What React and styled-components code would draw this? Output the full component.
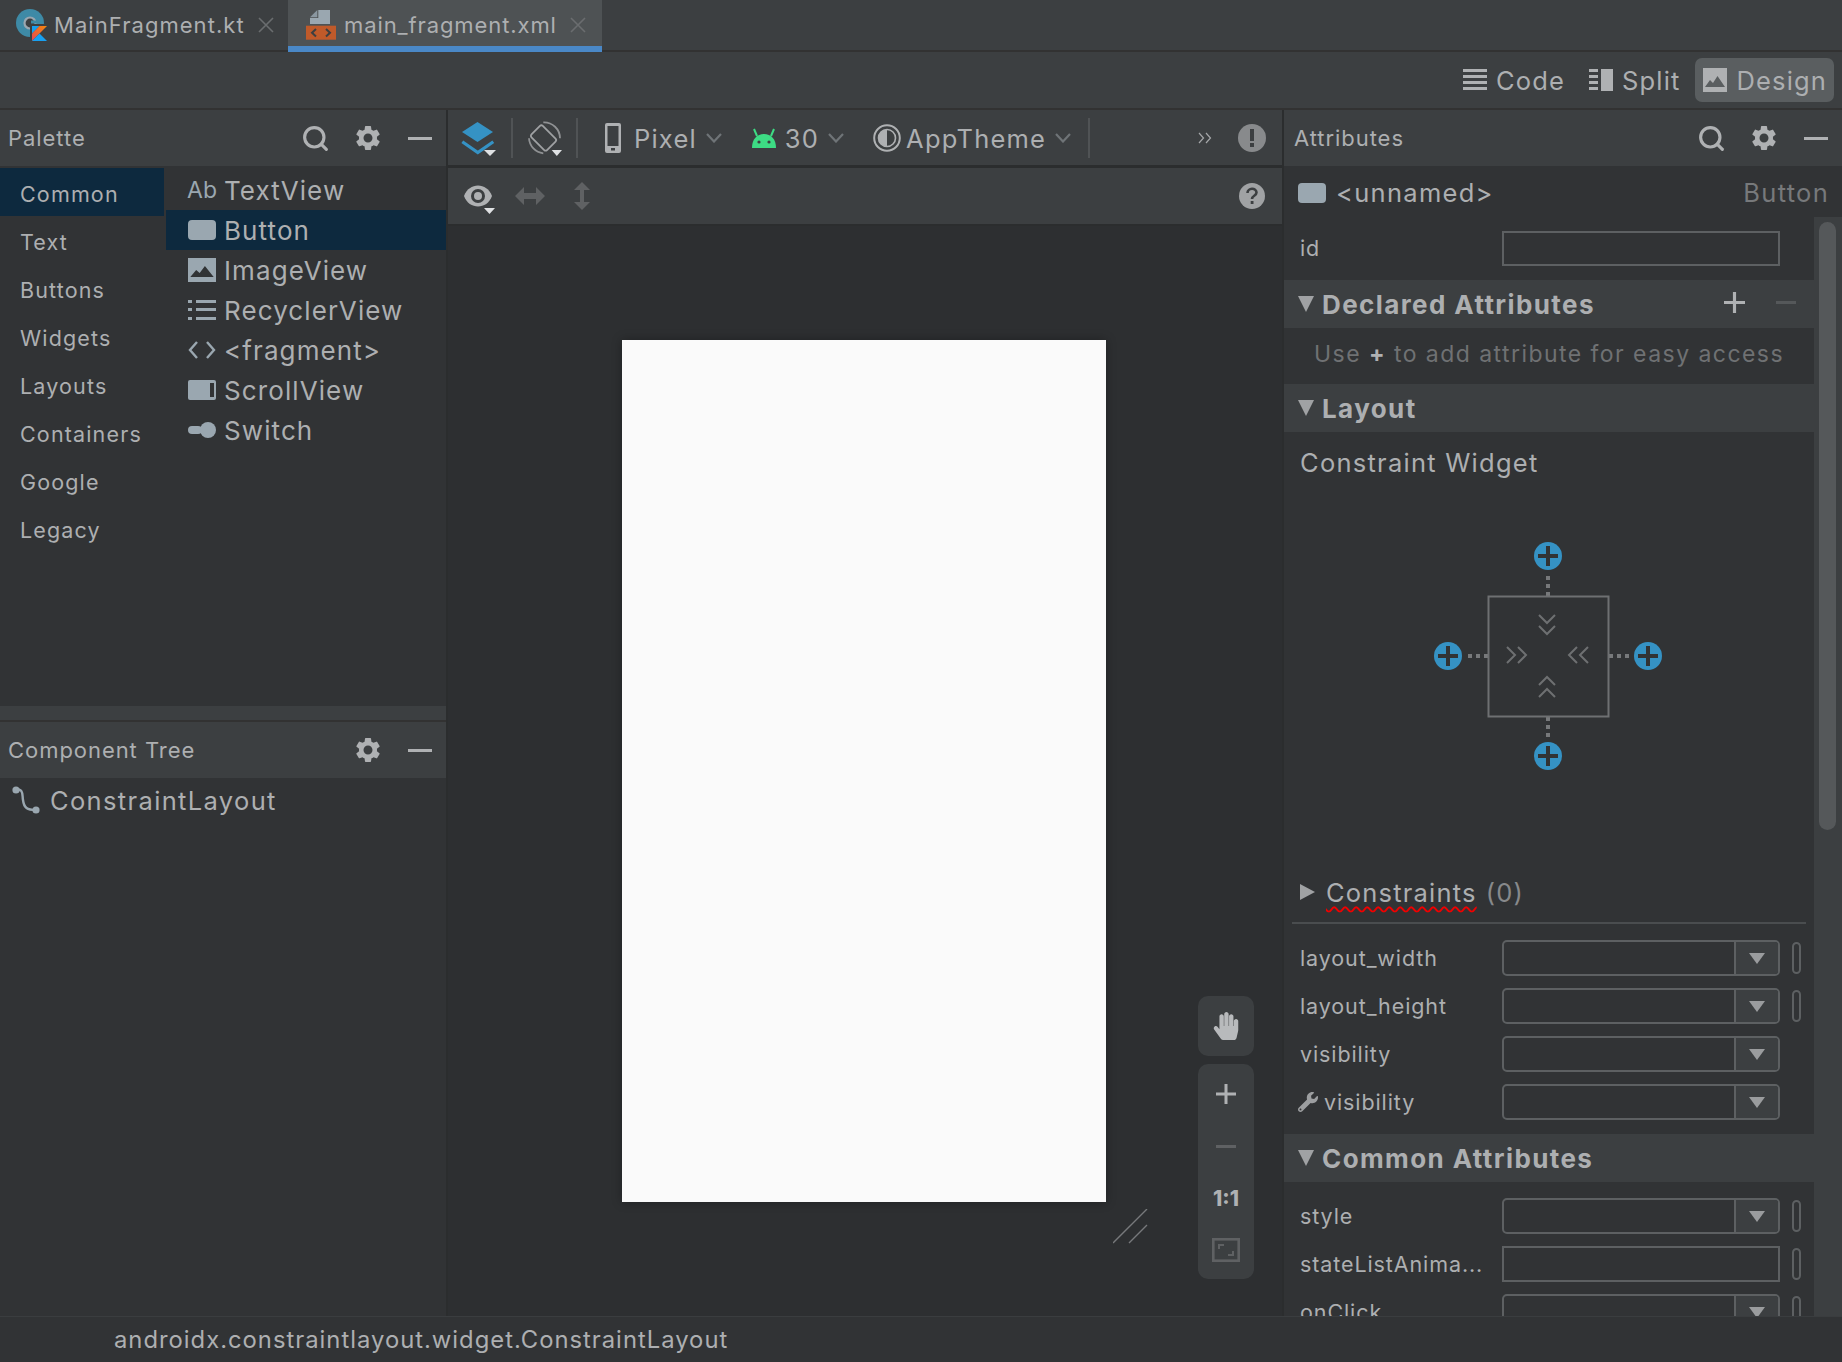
import styled, { createGlobalStyle } from 'styled-components';
import { MdSettings } from 'react-icons/md';
import { FaHandPaper, FaWrench } from 'react-icons/fa';
import { Search } from 'lucide-react';

const GlobalStyle = createGlobalStyle`
  html, body {
    margin: 0;
    padding: 0;
    background: #3c3f41;
  }
  * {
    box-sizing: border-box;
  }
`;

const Root = styled.div`
  width: 1842px;
  height: 1362px;
  overflow: hidden;
  display: flex;
  flex-direction: column;
  background: #3c3f41;
  color: #adafb1;
  font-family: Inter, "Liberation Sans", sans-serif;
  font-size: 21px;
  letter-spacing: 0.6px;
`;

const TabBar = styled.div`
  height: 52px;
  flex: none;
  display: flex;
  border-bottom: 2px solid #323232;
`;

const Tab = styled.div`
  height: ${p => (p.$active ? '52px' : '50px')};
  width: ${p => p.$width}px;
  display: flex;
  align-items: center;
  padding: ${p => (p.$active ? '4px' : '0')} 0 0 ${p => p.$pad}px;
  background: ${p => (p.$active ? '#4e5254' : 'transparent')};
  border-bottom: ${p => (p.$active ? '6px solid #4a88c7' : 'none')};
  font-size: 22px;
  letter-spacing: ${p => (p.$active ? '0.9px' : '1.05px')};
  svg { flex: none; }
`;

const TabName = styled.span`
  margin-left: ${p => p.$gap}px;
  width: ${p => p.$width}px;
  white-space: nowrap;
`;

const CloseIcon = styled.svg`
  width: 16px;
  height: 16px;
  stroke: #6a6d6f;
  stroke-width: 1.6;
  fill: none;
`;

const ModeBar = styled.div`
  height: 58px;
  flex: none;
  display: flex;
  justify-content: flex-end;
  align-items: center;
  padding-right: 8px;
  border-bottom: 2px solid #323232;
`;

const ModeButton = styled.div`
  height: 44px;
  display: flex;
  align-items: center;
  gap: 9px;
  padding: ${p => (p.$active ? '0 7px 0 8px' : '0 8px')};
  margin-right: ${p => p.$right || 0}px;
  margin-left: ${p => (p.$active ? '7px' : '0')};
  border-radius: 7px;
  background: ${p => (p.$active ? '#5a5e60' : 'transparent')};
  font-size: 25.5px;
  letter-spacing: 1.15px;
`;

const Main = styled.div`
  flex: 1;
  min-height: 0;
  display: flex;
`;

const LeftColumn = styled.div`
  width: 448px;
  flex: none;
  display: flex;
  flex-direction: column;
  background: #313335;
  border-right: 2px solid #2b2d2e;
`;

const PanelHeader = styled.div`
  height: ${p => p.$height || 56}px;
  flex: none;
  display: flex;
  align-items: center;
  padding: 0 14px 0 ${p => p.$pad || 8}px;
  background: #3c3f41;
  font-size: 22px;
  letter-spacing: 0.95px;
`;

const PanelTitle = styled.span`
  flex: 1;
`;

const HeaderIcons = styled.div`
  display: flex;
  align-items: center;
  gap: 24px;
  color: #afb1b3;
`;

const GearSlot = styled.span`
  display: block;
  margin: 0 1px 0 -1px;
`;

const MinusBar = styled.span`
  display: block;
  width: ${p => p.$width || 24}px;
  height: 3px;
  margin-top: ${p => p.$top || 0}px;
  background: ${p => p.$color || '#afb1b3'};
`;

const Palette = styled.div`
  height: 596px;
  flex: none;
  display: flex;
  flex-direction: column;
`;

const PaletteBody = styled.div`
  flex: 1;
  display: flex;
  padding-top: 2px;
`;

const CategoryList = styled.div`
  width: 164px;
  flex: none;
  margin-right: 2px;
`;

const Category = styled.div`
  height: 48px;
  display: flex;
  align-items: center;
  padding: 3px 0 0 20px;
  background: ${p => (p.$selected ? '#0d293e' : 'transparent')};
  font-size: 21.5px;
  letter-spacing: 1.15px;
`;

const ItemList = styled.div`
  flex: 1;
  padding-top: 2px;
`;

const Item = styled.div`
  height: 40px;
  display: flex;
  align-items: center;
  gap: 8px;
  padding-left: 22px;
  background: ${p => (p.$selected ? '#0d293e' : 'transparent')};
  font-size: 26px;
  letter-spacing: 1.1px;
`;

const ItemGlyph = styled.span`
  width: 28px;
  flex: none;
  display: flex;
  justify-content: center;
  color: #9aa7b0;
  font-size: 23px;
  letter-spacing: 0;
`;

const Band = styled.div`
  height: 16px;
  flex: none;
  background: #3c3f41;
  border-bottom: 2px solid #323232;
`;

const TreeRow = styled.div`
  height: 46px;
  display: flex;
  align-items: center;
  gap: 10px;
  padding: 0 0 2px 12px;
  font-size: 25.5px;
  letter-spacing: 1.35px;
`;

const Center = styled.div`
  flex: 1;
  min-width: 0;
  display: flex;
  flex-direction: column;
`;

const DesignToolbar = styled.div`
  height: ${p => p.$height}px;
  flex: none;
  display: flex;
  align-items: center;
  padding: ${p => p.$top || 0}px 16px 0 13px;
  background: #3c3f41;
  border-bottom: ${p => p.$border}px solid #2b2d2e;
`;

const ToolbarDivider = styled.span`
  width: 2px;
  height: 40px;
  flex: none;
  margin: 0 15px 0 ${p => p.$left || 14}px;
  background: #505355;
`;

const ToolGap = styled.span`
  width: ${p => p.$width}px;
  flex: none;
`;

const DropButton = styled.div`
  display: flex;
  align-items: center;
  margin-right: ${p => p.$right}px;
  font-size: 25.5px;
  letter-spacing: 1.2px;
`;

const DropLabel = styled.span`
  margin: 0 9px 0 ${p => p.$gap}px;
`;

const Spacer = styled.span`
  flex: 1;
`;

const EyeSlot = styled.span`
  display: flex;
  margin-top: 8px;
`;

const Canvas = styled.div`
  flex: 1;
  min-height: 0;
  position: relative;
  display: flex;
  justify-content: center;
  padding: 114px 2px 0 0;
  background: #2d2f31;
`;

const Page = styled.div`
  width: 484px;
  height: 862px;
  position: relative;
  background: #fafafa;
  box-shadow: 0 0 10px rgba(0, 0, 0, 0.3);
`;

const ResizeHandle = styled.svg`
  position: absolute;
  left: 491px;
  top: 869px;
  width: 36px;
  height: 36px;
  stroke: #77797b;
  stroke-width: 1.4;
  fill: none;
`;

const FloatingTools = styled.div`
  position: absolute;
  left: 750px;
  top: 770px;
  width: 56px;
  display: flex;
  flex-direction: column;
  gap: 8px;
`;

const HandTool = styled.div`
  height: 60px;
  display: flex;
  align-items: center;
  justify-content: center;
  background: #3c3f41;
  border-radius: 10px;
  color: #b8babc;
`;

const ZoomTools = styled.div`
  height: 215px;
  display: grid;
  grid-auto-rows: 52px;
  justify-items: center;
  align-items: center;
  padding-top: 4px;
  background: #3c3f41;
  border-radius: 10px;
  color: #afb1b3;
`;

const OneToOne = styled.span`
  font-size: 21px;
  font-weight: 800;
  letter-spacing: 0;
  line-height: 1;
`;

const RightPanel = styled.div`
  flex: none;
  width: 560px;
  display: flex;
  flex-direction: column;
  background: #313335;
  border-left: 2px solid #2b2d2e;
`;

const SelectionRow = styled.div`
  height: 51px;
  flex: none;
  display: flex;
  align-items: center;
  padding: 2px 13px 0 14px;
  font-size: 25.5px;
  letter-spacing: 1.3px;
`;

const SelectionName = styled.span`
  flex: 1;
  margin-left: 10px;
`;

const WidgetType = styled.span`
  color: #77797b;
`;

const AttributesBody = styled.div`
  flex: 1;
  min-height: 0;
  display: flex;
`;

const AttributesScroll = styled.div`
  flex: 1;
  min-width: 0;
  overflow: hidden;
`;

const ScrollTrack = styled.div`
  width: 28px;
  flex: none;
  padding: 5px 5px 0;
  background: #3c3f41;
`;

const ScrollThumb = styled.div`
  width: 17px;
  height: 608px;
  border-radius: 9px;
  background: #55585a;
`;

const SectionHeader = styled.div`
  height: 48px;
  display: flex;
  align-items: center;
  padding: 0 18px 0 14px;
  margin-top: ${p => p.$top || 0}px;
  background: #3c3f41;
  font-size: 26px;
  font-weight: 700;
  letter-spacing: 1.4px;
`;

const DownTriangle = styled.span`
  width: 0;
  height: 0;
  flex: none;
  margin-right: 8px;
  border-left: 8.5px solid transparent;
  border-right: 8.5px solid transparent;
  border-top: 16px solid #a0a2a4;
`;

const SectionTitle = styled.span`
  flex: 1;
  padding-top: 1px;
`;

const PlusIcon = styled.svg`
  width: 21px;
  height: 21px;
  margin-right: 31px;
  margin-top: -4px;
  fill: #afb1b3;
`;

const Hint = styled.div`
  height: 56px;
  display: flex;
  align-items: center;
  padding: 0 0 5px 30px;
  color: #6f7173;
  font-size: 23px;
  letter-spacing: 1.45px;
  white-space: pre;
`;

const HintPlus = styled.b`
  color: #afb1b3;
`;

const WidgetTitle = styled.div`
  height: 62px;
  display: flex;
  align-items: center;
  padding: 0 0 2px 16px;
  font-size: 25.5px;
  letter-spacing: 1.25px;
`;

const WidgetWrap = styled.div`
  display: flex;
  justify-content: center;
  padding: 46px 2px 0 0;
`;

const ConstraintsRow = styled.div`
  height: 54px;
  margin-top: 94px;
  display: flex;
  align-items: center;
  padding: 0 0 2px 16px;
  font-size: 25.5px;
  letter-spacing: 1.2px;
`;

const RightTriangle = styled.span`
  width: 0;
  height: 0;
  flex: none;
  margin-right: 11px;
  border-top: 8.5px solid transparent;
  border-bottom: 8.5px solid transparent;
  border-left: 15px solid #a0a2a4;
`;

const Squiggly = styled.span`
  text-decoration: underline wavy #f00000 2px;
  text-underline-offset: 4px;
`;

const Count = styled.span`
  margin-left: 9px;
  color: #87898b;
`;

const Divider = styled.div`
  height: 2px;
  margin: 2px 8px 10px;
  background: #4a4d4f;
`;

const PropRow = styled.div`
  height: ${p => p.$height || 48}px;
  margin-top: ${p => p.$top || 0}px;
  display: flex;
  align-items: center;
  padding: 0 0 ${p => (p.$height ? '1px' : '0')} 16px;
  font-size: 21.5px;
  letter-spacing: 0.9px;
`;

const PropLabel = styled.span`
  width: 202px;
  flex: none;
  display: flex;
  align-items: center;
  gap: 6px;
  white-space: nowrap;
`;

const WrenchWrap = styled.span`
  display: flex;
  margin-left: -2px;
  color: #9c9ea0;
`;

const Field = styled.div`
  width: 278px;
  height: ${p => (p.$short ? 35 : 36)}px;
  flex: none;
  display: flex;
  justify-content: flex-end;
  border: 2px solid #5d6062;
  border-radius: ${p => (p.$combo ? '5px' : '0')};
  overflow: hidden;
`;

const ComboArrow = styled.div`
  width: 44px;
  display: flex;
  align-items: center;
  justify-content: center;
  background: #3c3f41;
  border-left: 2px solid #5d6062;
`;

const ArrowGlyph = styled.span`
  width: 0;
  height: 0;
  border-left: 8.5px solid transparent;
  border-right: 8.5px solid transparent;
  border-top: 11px solid #9a9c9e;
`;

const BindPill = styled.span`
  width: 9px;
  height: 32px;
  flex: none;
  margin-left: 12px;
  border: 2px solid #5d6062;
  border-radius: 5px;
`;

const StatusBar = styled.div`
  height: 46px;
  flex: none;
  display: flex;
  align-items: center;
  padding-left: 114px;
  background: #313335;
  border-top: 1px solid #3a3d3f;
  font-size: 23.8px;
  letter-spacing: 1px;
`;

const Gear = ({ size = 30 }) => (
  <GearSlot>
    <MdSettings size={size} style={{ display: 'block' }} />
  </GearSlot>
);

const Find = () => <Search size={29} strokeWidth={2.6} style={{ display: 'block' }} />;

const Close = () => (
  <CloseIcon viewBox="0 0 16 16">
    <path d="M1 1 L15 15 M15 1 L1 15" />
  </CloseIcon>
);

const KotlinFileIcon = () => (
  <svg width="32" height="32" viewBox="0 0 32 32">
    <defs>
      <linearGradient id="kotlinBand" x1="1" y1="0" x2="0" y2="1">
        <stop offset="0" stopColor="#f88909" />
        <stop offset="1" stopColor="#e44857" />
      </linearGradient>
    </defs>
    <circle cx="14" cy="14" r="14" fill="#3e8aa6" />
    <circle cx="14" cy="14" r="5.5" fill="#3c3f41" stroke="#9aa7b0" strokeWidth="2.2" />
    <rect x="15" y="11.5" width="7" height="3" fill="#3e8aa6" />
    <rect x="14" y="15" width="18" height="17" fill="#3c3f41" />
    <path d="M16 17 H23.5 L16 24.5 Z" fill="#18a0f0" />
    <path d="M23.5 17 H31 L16 32 V24.5 Z" fill="url(#kotlinBand)" />
    <path d="M16 32 H31 L23.5 24.5 Z" fill="#18a0f0" />
  </svg>
);

const XmlFileIcon = () => (
  <svg width="30" height="30" viewBox="0 0 30 30">
    <path d="M12.3 0 H24 V14 H4 V8 H12.3 Z" fill="#9aa7b0" />
    <path d="M11.3 0 L4 7.3 H11.3 Z" fill="#8a97a0" />
    <rect x="0" y="15.7" width="30" height="14" fill="#c05a2a" />
    <path d="M10 19 L6 22.7 L10 26.5 M20 19 L24 22.7 L20 26.5" fill="none" stroke="#3c3f41" strokeWidth="2" />
  </svg>
);

const CodeIcon = () => (
  <svg width="24" height="22" viewBox="0 0 24 22" fill="#afb1b3">
    <rect y="0" width="24" height="3" />
    <rect y="6" width="24" height="3" />
    <rect y="12" width="24" height="3" />
    <rect y="18" width="24" height="3" />
  </svg>
);

const SplitIcon = () => (
  <svg width="24" height="22" viewBox="0 0 24 22" fill="#afb1b3">
    <rect x="12" y="0" width="12" height="22" />
    <rect y="0" width="9" height="3" />
    <rect y="6" width="9" height="3" />
    <rect y="12" width="9" height="3" />
    <rect y="18" width="9" height="3" />
  </svg>
);

const PictureIcon = ({ width = 24, height = 24, color = '#afb1b3', cut = '#5a5e60' }) => (
  <svg width={width} height={height} viewBox="0 0 24 24" preserveAspectRatio="none">
    <rect width="24" height="24" fill={color} />
    <path d="M2 19 L7 12 L10 15 L14.5 8 L22 19 Z" fill={cut} />
  </svg>
);

const LayersIcon = () => (
  <svg width="36" height="36" viewBox="0 0 36 36">
    <path d="M16.5 2 L32 12 L16.5 22 L1 12 Z" fill="#3592c4" />
    <path d="M1.3 21.7 L16.8 32.5 L32.3 21.7" fill="none" stroke="#3592c4" strokeWidth="3.2" />
    <path d="M23 30 H35 L29 36 Z" fill="#dfe1e3" />
  </svg>
);

const RotateIcon = () => (
  <svg width="34" height="36" viewBox="0 0 34 36">
    <rect x="7.5" y="7" width="16" height="22" rx="2" transform="rotate(-45 15.5 18)" fill="none" stroke="#9fa1a3" strokeWidth="1.8" />
    <path d="M15.3 2.3 A16 16 0 0 1 32 18.3 M1 18.3 A16 16 0 0 0 15.3 33.3" fill="none" stroke="#8f9193" strokeWidth="1.8" />
    <path d="M23.7 30 H34 L28.8 36 Z" fill="#dfe1e3" />
  </svg>
);

const PhoneIcon = () => (
  <svg width="16" height="30" viewBox="0 0 16 30">
    <path d="M2 0 H14 Q16 0 16 2 V28 Q16 30 14 30 H2 Q0 30 0 28 V2 Q0 0 2 0 Z M2.5 3 V23 H13.5 V3 Z" fill="#afb1b3" fillRule="evenodd" />
    <rect x="6" y="25" width="4" height="2.5" fill="#3c3f41" />
  </svg>
);

const AndroidIcon = () => (
  <svg width="24" height="24" viewBox="0 0 24 24">
    <path d="M0 22 C0 13 5 8 12 8 C19 8 24 13 24 22 Z" fill="#3ddc84" />
    <path d="M5 10 L2 3 M19 10 L22 3" stroke="#3ddc84" strokeWidth="2" />
    <circle cx="7" cy="16" r="1.6" fill="#3c3f41" />
    <circle cx="17" cy="16" r="1.6" fill="#3c3f41" />
  </svg>
);

const ThemeIcon = () => (
  <svg width="28" height="28" viewBox="0 0 28 28">
    <circle cx="14" cy="14" r="12.8" fill="none" stroke="#afb1b3" strokeWidth="2" />
    <circle cx="14" cy="14" r="8.5" fill="none" stroke="#afb1b3" strokeWidth="1.6" />
    <path d="M14 5.5 A8.5 8.5 0 0 0 14 22.5 Z" fill="#afb1b3" />
  </svg>
);

const Chevron = () => (
  <svg width="16" height="10" viewBox="0 0 16 10" fill="none" stroke="#6f7477" strokeWidth="2.2">
    <path d="M1 1 L8 8.5 L15 1" />
  </svg>
);

const MoreIcon = () => (
  <svg width="15" height="12" viewBox="0 0 15 12" fill="none" stroke="#a5a7a9" strokeWidth="1.2">
    <path d="M1 1 L5.5 6 L1 11 M8 1 L12.5 6 L8 11" />
  </svg>
);

const WarningIcon = () => (
  <svg width="28" height="28" viewBox="0 0 28 28">
    <circle cx="14" cy="14" r="14" fill="#888a8c" />
    <rect x="12" y="5" width="4" height="12" fill="#3c3f41" />
    <rect x="12" y="19" width="4" height="4" fill="#3c3f41" />
  </svg>
);

const HelpIcon = () => (
  <svg width="26" height="26" viewBox="0 0 26 26">
    <circle cx="13" cy="13" r="13" fill="#a0a2a4" />
    <path d="M8.5 10 C8.5 4.5 17.5 4.5 17.5 9.5 C17.5 13 13 12.5 13 16" fill="none" stroke="#3c3f41" strokeWidth="2.6" />
    <rect x="11.7" y="18" width="2.8" height="3" fill="#3c3f41" />
  </svg>
);

const EyeIcon = () => (
  <svg width="34" height="30" viewBox="0 0 34 30">
    <path d="M3 11 C8 -3 26 -3 31 11 C26 25 8 25 3 11 Z" fill="#afb1b3" />
    <circle cx="17" cy="11" r="7" fill="#3c3f41" />
    <circle cx="17" cy="11" r="4" fill="#afb1b3" />
    <path d="M23 23 H34 L28.5 29 Z" fill="#dfe1e3" />
  </svg>
);

const HorizontalArrows = () => (
  <svg width="30" height="18" viewBox="0 0 30 18" fill="#5f6163">
    <path d="M0 9 L9 0 V6 H21 V0 L30 9 L21 18 V12 H9 V18 Z" />
  </svg>
);

const VerticalArrows = () => (
  <svg width="18" height="28" viewBox="0 0 18 28" fill="#5f6163">
    <path d="M9 0 L17 8 H11 V20 H17 L9 28 L1 20 H7 V8 H1 Z" />
  </svg>
);

const PlusGlyph = ({ size = 20, color = '#afb1b3' }) => (
  <svg width={size} height={size} viewBox="0 0 20 20" fill={color}>
    <path d="M8.5 0 H11.5 V8.5 H20 V11.5 H11.5 V20 H8.5 V11.5 H0 V8.5 H8.5 Z" />
  </svg>
);

const FitIcon = () => (
  <svg width="28" height="24" viewBox="0 0 28 24" fill="none" stroke="#5f6163" strokeWidth="2.6">
    <rect x="1.3" y="1.3" width="25.4" height="21.4" />
    <path d="M7 11 V7 H12 M21 13 V17 H16" strokeWidth="2" />
  </svg>
);

const TreeIcon = () => (
  <svg width="28" height="28" viewBox="0 0 28 28" fill="none">
    <path d="M3 3 C12 3 10 8 11 14 C12 22 15 24 24 24" stroke="#9aa7b0" strokeWidth="2.4" />
    <circle cx="4" cy="4" r="3.6" fill="#9aa7b0" />
    <circle cx="24" cy="24" r="3.6" fill="#9aa7b0" />
  </svg>
);

const ButtonGlyph = ({ width = 28, height = 20 }) => (
  <svg width={width} height={height} viewBox={`0 0 ${width} ${height}`}>
    <rect width={width} height={height} rx="4" fill="#9aa7b0" />
  </svg>
);

const ListGlyph = () => (
  <svg width="28" height="20" viewBox="0 0 28 20" fill="#9aa7b0">
    <rect width="4" height="3" />
    <rect x="8" width="20" height="3" />
    <rect y="8" width="4" height="3" />
    <rect x="8" y="8" width="20" height="3" />
    <rect y="17" width="4" height="3" />
    <rect x="8" y="17" width="20" height="3" />
  </svg>
);

const CodeGlyph = () => (
  <svg width="28" height="20" viewBox="0 0 28 20" fill="none" stroke="#9aa7b0" strokeWidth="2.4">
    <path d="M9 2 L2 10 L9 18 M19 2 L26 10 L19 18" />
  </svg>
);

const ScrollGlyph = () => (
  <svg width="28" height="20" viewBox="0 0 28 20">
    <rect width="28" height="20" rx="2" fill="#9aa7b0" />
    <rect x="22" y="3" width="4" height="14" fill="#313335" />
  </svg>
);

const SwitchGlyph = () => (
  <svg width="28" height="16" viewBox="0 0 28 16" fill="#9aa7b0">
    <rect y="4" width="14" height="8" rx="4" />
    <circle cx="20" cy="8" r="8" />
  </svg>
);

const ConstraintPlus = ({ x, y }) => (
  <g>
    <circle cx={x} cy={y} r="14" fill="#3592c4" />
    <path d={`M${x - 10} ${y} H${x + 10} M${x} ${y - 10} V${y + 10}`} stroke="#313335" strokeWidth="4" />
  </g>
);

// the box with the four blue handles
const ConstraintWidget = () => (
  <svg width="236" height="232" viewBox="0 0 236 232" fill="none">
    <ConstraintPlus x={118} y={16} />
    <ConstraintPlus x={18} y={116} />
    <ConstraintPlus x={218} y={116} />
    <ConstraintPlus x={118} y={216} />
    <path d="M118 36 V56 M118 177 V197" stroke="#77797b" strokeWidth="4" strokeDasharray="4 4" />
    <path d="M38 116 H58 M179 116 H199" stroke="#77797b" strokeWidth="4" strokeDasharray="4 4" />
    <rect x="58.5" y="56.5" width="120" height="120" stroke="#6e7072" strokeWidth="2" />
    <g stroke="#6e7072" strokeWidth="2">
      <path d="M109 75 L117 83 L125 75 M109 86 L117 94 L125 86" />
      <path d="M77 107 L85 115 L77 123 M88 107 L96 115 L88 123" />
      <path d="M147 107 L139 115 L147 123 M158 107 L150 115 L158 123" />
      <path d="M109 145 L117 137 L125 145 M109 157 L117 149 L125 157" />
    </g>
  </svg>
);

const categories = ['Common', 'Text', 'Buttons', 'Widgets', 'Layouts', 'Containers', 'Google', 'Legacy'];

const paletteItems = [
  { name: 'TextView', glyph: 'Ab' },
  { name: 'Button', glyph: <ButtonGlyph />, selected: true },
  { name: 'ImageView', glyph: <PictureIcon width={28} height={24} color="#9aa7b0" cut="#313335" /> },
  { name: 'RecyclerView', glyph: <ListGlyph /> },
  { name: '<fragment>', glyph: <CodeGlyph /> },
  { name: 'ScrollView', glyph: <ScrollGlyph /> },
  { name: 'Switch', glyph: <SwitchGlyph /> }
];

const Combo = () => (
  <Field $combo>
    <ComboArrow>
      <ArrowGlyph />
    </ComboArrow>
  </Field>
);

const App = () => (
  <Root>
    <GlobalStyle />
    <TabBar>
      <Tab $width={288} $pad={16}>
        <KotlinFileIcon />
        <TabName $gap={6} $width={204}>MainFragment.kt</TabName>
        <Close />
      </Tab>
      <Tab $width={314} $pad={18} $active>
        <XmlFileIcon />
        <TabName $gap={8} $width={226}>main_fragment.xml</TabName>
        <Close />
      </Tab>
    </TabBar>

    <ModeBar>
      <ModeButton $right={8}><CodeIcon />Code</ModeButton>
      <ModeButton><SplitIcon />Split</ModeButton>
      <ModeButton $active><PictureIcon />Design</ModeButton>
    </ModeBar>

    <Main>
      <LeftColumn>
        <Palette>
          <PanelHeader>
            <PanelTitle>Palette</PanelTitle>
            <HeaderIcons>
              <Find />
              <Gear />
              <MinusBar />
            </HeaderIcons>
          </PanelHeader>
          <PaletteBody>
            <CategoryList>
              {categories.map((name, index) => (
                <Category key={name} $selected={index === 0}>{name}</Category>
              ))}
            </CategoryList>
            <ItemList>
              {paletteItems.map(item => (
                <Item key={item.name} $selected={item.selected}>
                  <ItemGlyph>{item.glyph}</ItemGlyph>
                  {item.name}
                </Item>
              ))}
            </ItemList>
          </PaletteBody>
        </Palette>
        <Band />
        <PanelHeader>
          <PanelTitle>Component Tree</PanelTitle>
          <HeaderIcons>
            <Gear />
            <MinusBar />
          </HeaderIcons>
        </PanelHeader>
        <TreeRow>
          <TreeIcon />
          ConstraintLayout
        </TreeRow>
      </LeftColumn>

      <Center>
        <DesignToolbar $height={58} $border={3} $top={1}>
          <LayersIcon />
          <ToolbarDivider />
          <RotateIcon />
          <ToolbarDivider />
          <ToolGap $width={12} />
          <DropButton $right={30}>
            <PhoneIcon />
            <DropLabel $gap={13}>Pixel</DropLabel>
            <Chevron />
          </DropButton>
          <DropButton $right={29}>
            <AndroidIcon />
            <DropLabel $gap={9}>30</DropLabel>
            <Chevron />
          </DropButton>
          <DropButton $right={0}>
            <ThemeIcon />
            <DropLabel $gap={5}>AppTheme</DropLabel>
            <Chevron />
          </DropButton>
          <ToolbarDivider $left={17} />
          <Spacer />
          <MoreIcon />
          <ToolGap $width={25} />
          <WarningIcon />
        </DesignToolbar>
        <DesignToolbar $height={58} $border={2}>
          <EyeSlot><EyeIcon /></EyeSlot>
          <ToolGap $width={20} />
          <HorizontalArrows />
          <ToolGap $width={28} />
          <VerticalArrows />
          <Spacer />
          <HelpIcon />
          <ToolGap $width={1} />
        </DesignToolbar>
        <Canvas>
          <Page>
            <ResizeHandle viewBox="0 0 36 36">
              <path d="M0 34 L34 0 M16 34 L34 16" />
            </ResizeHandle>
          </Page>
          <FloatingTools>
            <HandTool>
              <FaHandPaper size={28} />
            </HandTool>
            <ZoomTools>
              <PlusGlyph />
              <MinusBar $color="#5f6163" $width={20} />
              <OneToOne>1:1</OneToOne>
              <FitIcon />
            </ZoomTools>
          </FloatingTools>
        </Canvas>
      </Center>

      <RightPanel>
        <PanelHeader $pad={10}>
          <PanelTitle>Attributes</PanelTitle>
          <HeaderIcons>
            <Find />
            <Gear />
            <MinusBar />
          </HeaderIcons>
        </PanelHeader>
        <SelectionRow>
          <ButtonGlyph />
          <SelectionName>&lt;unnamed&gt;</SelectionName>
          <WidgetType>Button</WidgetType>
        </SelectionRow>
        <AttributesBody>
          <AttributesScroll>
            <PropRow $height={63}>
              <PropLabel>id</PropLabel>
              <Field $short />
            </PropRow>
            <SectionHeader>
              <DownTriangle />
              <SectionTitle>Declared Attributes</SectionTitle>
              <PlusIcon viewBox="0 0 20 20">
                <path d="M8.5 0 H11.5 V8.5 H20 V11.5 H11.5 V20 H8.5 V11.5 H0 V8.5 H8.5 Z" />
              </PlusIcon>
              <MinusBar $color="#55585a" $width={20} $top={-4} />
            </SectionHeader>
            <Hint>Use <HintPlus>+</HintPlus> to add attribute for easy access</Hint>
            <SectionHeader>
              <DownTriangle />
              <SectionTitle>Layout</SectionTitle>
            </SectionHeader>
            <WidgetTitle>Constraint Widget</WidgetTitle>
            <WidgetWrap>
              <ConstraintWidget />
            </WidgetWrap>
            <ConstraintsRow>
              <RightTriangle />
              <Squiggly>Constraints</Squiggly>
              <Count>(0)</Count>
            </ConstraintsRow>
            <Divider />
            <PropRow>
              <PropLabel>layout_width</PropLabel>
              <Combo />
              <BindPill />
            </PropRow>
            <PropRow>
              <PropLabel>layout_height</PropLabel>
              <Combo />
              <BindPill />
            </PropRow>
            <PropRow>
              <PropLabel>visibility</PropLabel>
              <Combo />
            </PropRow>
            <PropRow>
              <PropLabel>
                <WrenchWrap><FaWrench size={20} /></WrenchWrap>
                visibility
              </PropLabel>
              <Combo />
            </PropRow>
            <SectionHeader $top={8}>
              <DownTriangle />
              <SectionTitle>Common Attributes</SectionTitle>
            </SectionHeader>
            <PropRow $top={10}>
              <PropLabel>style</PropLabel>
              <Combo />
              <BindPill />
            </PropRow>
            <PropRow>
              <PropLabel>stateListAnima...</PropLabel>
              <Field />
              <BindPill />
            </PropRow>
            <PropRow>
              <PropLabel>onClick</PropLabel>
              <Combo />
              <BindPill />
            </PropRow>
          </AttributesScroll>
          <ScrollTrack>
            <ScrollThumb />
          </ScrollTrack>
        </AttributesBody>
      </RightPanel>
    </Main>

    <StatusBar>androidx.constraintlayout.widget.ConstraintLayout</StatusBar>
  </Root>
);

export default App;
